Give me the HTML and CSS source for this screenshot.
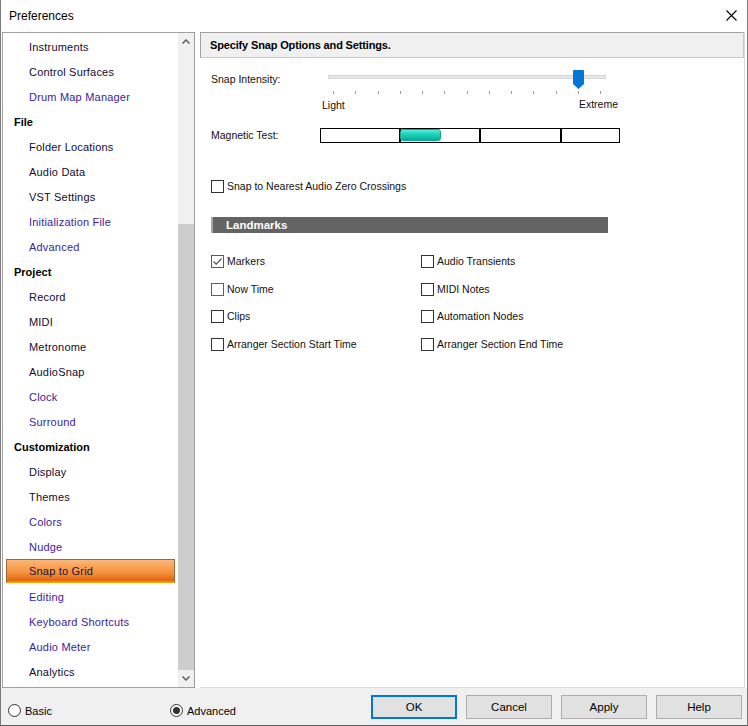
FILE: index.html
```html
<!DOCTYPE html>
<html>
<head>
<meta charset="utf-8">
<title>Preferences</title>
<link rel="stylesheet" href="styles.css">
</head>
<body>
<div class="window">
  <div class="titlebar">
    <span class="title">Preferences</span>
    <svg class="close" width="11" height="11" viewBox="0 0 11 11"><path d="M0.5 0.5 L10.5 10.5 M10.5 0.5 L0.5 10.5" stroke="#000" stroke-width="1.1" fill="none"/></svg>
  </div>
  <div class="main">
    <div class="sidebar">
      <ul class="tree">
        <li class="item">Instruments</li>
        <li class="item">Control Surfaces</li>
        <li class="item link">Drum Map Manager</li>
        <li class="cat">File</li>
        <li class="item">Folder Locations</li>
        <li class="item">Audio Data</li>
        <li class="item">VST Settings</li>
        <li class="item link">Initialization File</li>
        <li class="item link">Advanced</li>
        <li class="cat">Project</li>
        <li class="item">Record</li>
        <li class="item">MIDI</li>
        <li class="item">Metronome</li>
        <li class="item">AudioSnap</li>
        <li class="item link">Clock</li>
        <li class="item link">Surround</li>
        <li class="cat">Customization</li>
        <li class="item">Display</li>
        <li class="item">Themes</li>
        <li class="item link">Colors</li>
        <li class="item link">Nudge</li>
        <li class="item selected">Snap to Grid</li>
        <li class="item link">Editing</li>
        <li class="item link">Keyboard Shortcuts</li>
        <li class="item link">Audio Meter</li>
        <li class="item">Analytics</li>
      </ul>
      <div class="scrollbar">
        <div class="sb-arrow"><svg width="8" height="5" viewBox="0 0 8 5"><path d="M0.5 4.5 L4 1 L7.5 4.5" stroke="#606060" stroke-width="1.5" fill="none"/></svg></div>
        <div class="sb-track"><div class="sb-thumb"></div></div>
        <div class="sb-arrow"><svg width="8" height="5" viewBox="0 0 8 5"><path d="M0.5 0.5 L4 4 L7.5 0.5" stroke="#606060" stroke-width="1.5" fill="none"/></svg></div>
      </div>
    </div>
    <div class="panel">
      <div class="panel-header">Specify Snap Options and Settings.</div>
      <div class="panel-body">
        <div class="field slider-field">
          <div class="label slider-label">Snap Intensity:</div>
          <div class="slider">
            <div class="track"></div>
            <svg class="thumb" width="11" height="19" viewBox="0 0 11 19"><path d="M1 0 H10 Q11 0 11 1 V14 L5.5 19 L0 14 V1 Q0 0 1 0 Z" fill="#0078d7"/></svg>
            <div class="ticks">
              <span></span><span></span><span></span><span></span><span></span><span></span><span></span><span></span><span></span><span></span><span></span><span></span><span></span>
            </div>
            <div class="slider-labels">
              <span class="light">Light</span>
              <span class="extreme">Extreme</span>
            </div>
          </div>
        </div>
        <div class="field magnet-field">
          <div class="label">Magnetic Test:</div>
          <div class="magnet">
            <div class="cell c1"></div>
            <div class="cell c2"><div class="blob"></div></div>
            <div class="cell c3"></div>
            <div class="cell c4"></div>
          </div>
        </div>
        <div class="check zero">
          <span class="box"></span><span class="ctext">Snap to Nearest Audio Zero Crossings</span>
        </div>
        <div class="section-bar">Landmarks</div>
        <div class="landmarks">
          <div class="check"><span class="box checked"><svg width="11" height="11" viewBox="0 0 11 11"><path d="M1.5 5.5 L4.2 8.2 L9.5 2.5" stroke="#555" stroke-width="1.2" fill="none"/></svg></span><span class="ctext">Markers</span></div>
          <div class="check"><span class="box"></span><span class="ctext">Audio Transients</span></div>
          <div class="check"><span class="box focus"></span><span class="ctext">Now Time</span></div>
          <div class="check"><span class="box"></span><span class="ctext">MIDI Notes</span></div>
          <div class="check"><span class="box"></span><span class="ctext">Clips</span></div>
          <div class="check"><span class="box"></span><span class="ctext">Automation Nodes</span></div>
          <div class="check"><span class="box"></span><span class="ctext">Arranger Section Start Time</span></div>
          <div class="check"><span class="box"></span><span class="ctext">Arranger Section End Time</span></div>
        </div>
      </div>
    </div>
  </div>
  <div class="footer">
    <label class="radio basic"><span class="circle"></span><span>Basic</span></label>
    <label class="radio adv"><span class="circle on"></span><span>Advanced</span></label>
    <div class="buttons">
      <button class="btn default">OK</button>
      <button class="btn">Cancel</button>
      <button class="btn">Apply</button>
      <button class="btn">Help</button>
    </div>
  </div>
</div>
</body>
</html>
```
FILE: styles.css
```css
* { box-sizing: border-box; }
html, body { margin: 0; padding: 0; background: #fff; }
body { font-family: "Liberation Sans", Arial, sans-serif; color: #000; }

.window {
  width: 748px;
  height: 726px;
  display: flex;
  flex-direction: column;
  border-left: 1px solid #7a7a7a;
  border-right: 1px solid #7a7a7a;
  border-bottom: 1px solid #5a5a5a;
  background: #fff;
  overflow: hidden;
}

.titlebar {
  height: 32px;
  flex: none;
  display: flex;
  align-items: center;
  padding: 0 0 1px 8px;
}
.title { font-size: 12px; color: #000; flex: 1; }
.close { margin-right: 10px; margin-top: 0; }

.main {
  height: 656px;
  flex: none;
  display: flex;
}

.sidebar {
  width: 193px;
  margin-left: 1px;
  border: 1px solid #a0a0a0;
  display: flex;
  flex: none;
}
.tree {
  list-style: none;
  margin: 0;
  padding: 2px 0 0 0;
  flex: 1;
  overflow: hidden;
  font-size: 11px;
}
.tree li {
  height: 25px;
  line-height: 25px;
  white-space: nowrap;
}
.item { padding-left: 26px; color: #140a30; letter-spacing: 0.2px; }
.item.link { color: #3b1c9c; }
.cat { padding-left: 11px; font-weight: bold; color: #000; }
.tree li.selected {
  height: 24px;
  line-height: 23px;
  margin: -1px 3px 2px 3px;
  padding-left: 22px;
  color: #1a1040;
  border: 1px solid #9a6a3c;
  border-bottom-color: #f7a400;
  background: linear-gradient(to bottom, #fbb87a 0%, #f9a357 30%, #f39340 55%, #e97520 80%, #e36510 92%, #f49a20 100%);
}

.scrollbar {
  width: 16px;
  flex: none;
  background: #f0f0f0;
  display: flex;
  flex-direction: column;
}
.sb-arrow {
  height: 17px;
  flex: none;
  display: flex;
  align-items: center;
  justify-content: center;
}
.sb-track { flex: 1; display: flex; flex-direction: column; justify-content: flex-end; }
.sb-thumb { height: 446px; background: #cdcdcd; }

.panel {
  width: 545px;
  margin-left: 5px;
  display: flex;
  flex-direction: column;
  border-right: 1px solid #d9d9d9;
  border-bottom: 1px solid #dcdcdc;
}
.panel-header {
  height: 26px;
  flex: none;
  background: #f0f0f0;
  border: 1px solid #a0a0a0;
  border-bottom-color: #c8c8c8;
  border-right-color: #c8c8c8;
  padding-left: 9px;
  line-height: 24px;
  font-size: 11px;
  font-weight: bold;
  letter-spacing: -0.15px;
  color: #000;
}
.panel-body {
  padding-left: 11px;
  font-size: 10.5px;
  color: #111;
}

.field { display: flex; }
.label { width: 109px; flex: none; font-size: 10.5px; line-height: 13px; }
.slider-field { margin-top: 10px; }
.slider-label { margin-top: 5px; }

.slider { position: relative; width: 300px; height: 46px; }
.track {
  margin: 7px 14px 0 8px;
  height: 4px;
  background: #e7e7e7;
  border: 1px solid #d6d6d6;
}
.thumb { position: absolute; left: 253px; top: 2px; }
.ticks {
  margin: 12px 0 0 13px;
  width: 268px;
  height: 3px;
  display: flex;
  justify-content: space-between;
}
.ticks span { width: 1px; height: 3px; background: #9a9a9a; }
.slider-labels {
  display: flex;
  justify-content: space-between;
  align-items: flex-start;
  margin-top: 5px;
  padding: 0 2px 0 2px;
  line-height: 13px;
}
.extreme { margin-top: -1px; }

.magnet-field { margin-top: 14px; align-items: center; }
.magnet {
  width: 300px;
  height: 15px;
  border: 1px solid #000;
  display: flex;
}
.cell { height: 100%; }
.c1 { width: 78px; }
.c2 { width: 80px; border-left: 2px solid #000; }
.c3 { width: 81px; border-left: 2px solid #000; }
.c4 { flex: 1; border-left: 2px solid #000; }
.blob {
  width: 41px;
  height: 12px;
  margin-left: -1px;
  border-radius: 3px;
  border: 1px solid #12a592;
  background: linear-gradient(to bottom, #5af0dc 0%, #22d6bf 35%, #12c4ad 70%, #0ea894 100%);
}

.check { display: flex; align-items: center; height: 13px; }
.box {
  width: 13px;
  height: 13px;
  flex: none;
  border: 1px solid #333;
  background: #fff;
  display: flex;
  align-items: center;
  justify-content: center;
}
.box.checked { border-color: #5a5a5a; }
.box.focus { border-color: #0078d7; }
.ctext { margin-left: 3px; line-height: 13px; white-space: nowrap; }
.zero { margin-top: 37px; }

.section-bar {
  margin-top: 24px;
  width: 397px;
  height: 16px;
  background: #646464;
  border-left: 2px solid #a6a6a6;
  color: #fff;
  font-weight: bold;
  font-size: 11.5px;
  line-height: 16px;
  padding-left: 13px;
}

.landmarks {
  margin-top: 22px;
  display: grid;
  grid-template-columns: 210px auto;
  row-gap: 14.6px;
}

.footer {
  flex: 1;
  background: #f0f0f0;
  display: flex;
  align-items: flex-start;
  padding: 7px 5px 0 7px;
  font-size: 11px;
}
.radio { display: flex; align-items: center; margin-top: 9px; color: #000; }
.radio.basic { width: 162px; }
.circle {
  width: 13px;
  height: 13px;
  border-radius: 50%;
  border: 1px solid #333;
  background: #fff;
  margin-right: 4px;
  display: flex;
  align-items: center;
  justify-content: center;
}
.circle.on::after {
  content: "";
  width: 7px;
  height: 7px;
  border-radius: 50%;
  background: #333;
}
.buttons { margin-left: auto; display: flex; gap: 9px; }
.btn {
  width: 86px;
  height: 24px;
  background: #e1e1e1;
  border: 1px solid #adadad;
  font-family: "Liberation Sans", Arial, sans-serif;
  font-size: 11.5px;
  color: #000;
  padding: 0;
}
.btn.default { border: 2px solid #0078d7; }
```
